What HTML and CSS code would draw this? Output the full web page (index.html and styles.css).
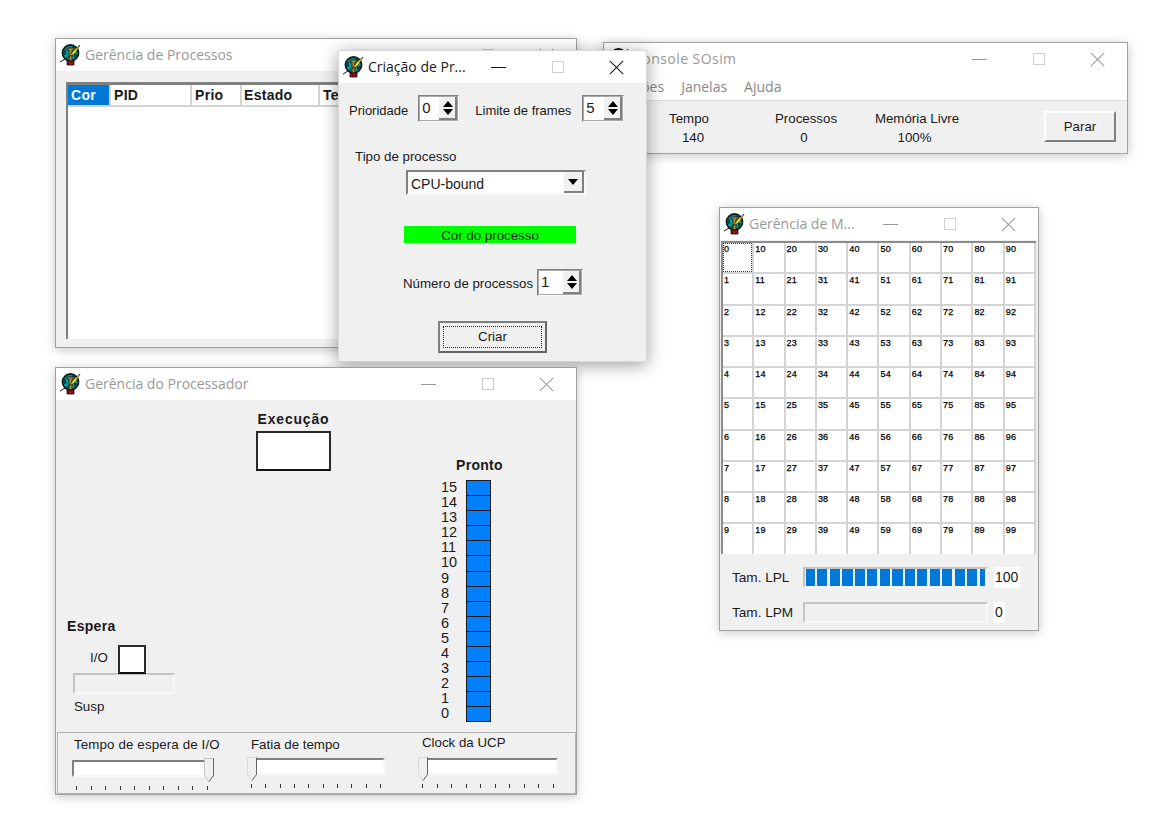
FILE: index.html
```html
<!DOCTYPE html>
<html>
<head>
  <meta charset="utf-8">
  <title>SOsim</title>
  <link rel="stylesheet" href="styles.css">
</head>
<body>
  <svg class="defs" width="0" height="0">
    <symbol id="appIcon" viewBox="0 0 22 22">
      <circle cx="11.500" cy="9" r="8" fill="#0b9a9c" stroke="#0a1c20" stroke-width="1.800"/>
      <path d="M4 6h3v5H4zM15 10h3v4h-3zM13 2h3v2h-3z" fill="#07484e"/>
      <path d="M8 4h8v2h-3v11h-3V6H8z" fill="#a88a40" stroke="#1c1408" stroke-width=".8"/>
      <path d="M8 17h7v4H8z" fill="#8a1414" stroke="#1c0606" stroke-width=".8"/>
      <path d="M1 18l7-4 1 0 4-5 1-2 7-6-4 7-3 3-1 0-4 2-8 5z" fill="#f4f010" stroke="#0a0a0a" stroke-width=".6"/>
    </symbol>
  </svg>

  <!-- Gerencia de processos -->
  <div class="win winProc inactive">
    <div class="titleBar">
      <svg class="appIcon"><use href="#appIcon"/></svg>
      <span class="titleText">Gerência de Processos</span>
      <div class="winBtns">
        <span class="winBtn"><i class="icoMin"></i></span>
        <span class="winBtn"><i class="icoMax"></i></span>
        <span class="winBtn"><i class="icoClose"></i></span>
      </div>
    </div>
    <div class="winBody procBody">
      <div class="procList">
        <div class="procHead">
          <span class="colCor">Cor</span>
          <span class="colPid">PID</span>
          <span class="colPrio">Prio</span>
          <span class="colEstado">Estado</span>
          <span class="colTempo">Tempo</span>
        </div>
      </div>
    </div>
  </div>

  <!-- Console -->
  <div class="win winConsole inactive">
    <div class="titleBar">
      <svg class="appIcon"><use href="#appIcon"/></svg>
      <span class="titleText">Console SOsim</span>
      <div class="winBtns">
        <span class="winBtn"><i class="icoMin"></i></span>
        <span class="winBtn"><i class="icoMax"></i></span>
        <span class="winBtn"><i class="icoClose"></i></span>
      </div>
    </div>
    <div class="menuBar">
      <span>Opções</span>
      <span>Janelas</span>
      <span>Ajuda</span>
    </div>
    <div class="winBody consoleBody">
      <div class="stat statTempo"><span>Tempo</span><span class="statValue">140</span></div>
      <div class="stat statProc"><span>Processos</span><span class="statZero">0</span></div>
      <div class="stat statMem"><span>Memória Livre</span><span class="statPct">100%</span></div>
      <button class="btn btnParar">Parar</button>
    </div>
  </div>

  <!-- Criacao de processos -->
  <div class="win winCreate">
    <div class="titleBar">
      <svg class="appIcon"><use href="#appIcon"/></svg>
      <span class="titleText">Criação de Pr...</span>
      <div class="winBtns">
        <span class="winBtn"><i class="icoMin"></i></span>
        <span class="winBtn"><i class="icoMax"></i></span>
        <span class="winBtn"><i class="icoClose"></i></span>
      </div>
    </div>
    <div class="winBody createBody">
      <div class="createTop">
        <span class="createLabel">Prioridade</span>
        <div class="spin"><span class="spinValue">0</span><span class="spinBtns"><i class="arrowUp"></i><i class="arrowDown"></i></span></div>
        <span class="createLabel frameLabel">Limite de frames</span>
        <div class="spin"><span class="spinValue">5</span><span class="spinBtns"><i class="arrowUp"></i><i class="arrowDown"></i></span></div>
      </div>
      <div class="tipoLabel">Tipo de processo</div>
      <div class="combo"><span class="comboValue">CPU-bound</span><span class="comboBtn"><i class="arrowDown"></i></span></div>
      <div class="colorBar">Cor do processo</div>
      <div class="numRow">
        <span class="numLabel">Número de processos</span>
        <div class="spin spinWide"><span class="spinValue">1</span><span class="spinBtns"><i class="arrowUp"></i><i class="arrowDown"></i></span></div>
      </div>
      <button class="btn btnCriar"><span class="focusRect">Criar</span></button>
    </div>
  </div>

  <!-- Gerencia de memoria -->
  <div class="win winMem inactive">
    <div class="titleBar">
      <svg class="appIcon"><use href="#appIcon"/></svg>
      <span class="titleText">Gerência de M...</span>
      <div class="winBtns">
        <span class="winBtn"><i class="icoMin"></i></span>
        <span class="winBtn"><i class="icoMax"></i></span>
        <span class="winBtn"><i class="icoClose"></i></span>
      </div>
    </div>
    <div class="winBody memBody">
      <div class="memGrid">
        <span class="memFocus">0</span><span>1</span><span>2</span><span>3</span><span>4</span><span>5</span><span>6</span><span>7</span><span>8</span><span>9</span>
        <span>10</span><span>11</span><span>12</span><span>13</span><span>14</span><span>15</span><span>16</span><span>17</span><span>18</span><span>19</span>
        <span>20</span><span>21</span><span>22</span><span>23</span><span>24</span><span>25</span><span>26</span><span>27</span><span>28</span><span>29</span>
        <span>30</span><span>31</span><span>32</span><span>33</span><span>34</span><span>35</span><span>36</span><span>37</span><span>38</span><span>39</span>
        <span>40</span><span>41</span><span>42</span><span>43</span><span>44</span><span>45</span><span>46</span><span>47</span><span>48</span><span>49</span>
        <span>50</span><span>51</span><span>52</span><span>53</span><span>54</span><span>55</span><span>56</span><span>57</span><span>58</span><span>59</span>
        <span>60</span><span>61</span><span>62</span><span>63</span><span>64</span><span>65</span><span>66</span><span>67</span><span>68</span><span>69</span>
        <span>70</span><span>71</span><span>72</span><span>73</span><span>74</span><span>75</span><span>76</span><span>77</span><span>78</span><span>79</span>
        <span>80</span><span>81</span><span>82</span><span>83</span><span>84</span><span>85</span><span>86</span><span>87</span><span>88</span><span>89</span>
        <span>90</span><span>91</span><span>92</span><span>93</span><span>94</span><span>95</span><span>96</span><span>97</span><span>98</span><span>99</span>
      </div>
      <div class="memRow">
        <span class="memLabel">Tam. LPL</span>
        <div class="gauge gaugeFull"></div>
        <span class="memValue">100</span>
      </div>
      <div class="memRow">
        <span class="memLabel">Tam. LPM</span>
        <div class="gauge"></div>
        <span class="memValue">0</span>
      </div>
    </div>
  </div>

  <!-- Gerencia do processador -->
  <div class="win winCpu inactive">
    <div class="titleBar">
      <svg class="appIcon"><use href="#appIcon"/></svg>
      <span class="titleText">Gerência do Processador</span>
      <div class="winBtns">
        <span class="winBtn"><i class="icoMin"></i></span>
        <span class="winBtn"><i class="icoMax"></i></span>
        <span class="winBtn"><i class="icoClose"></i></span>
      </div>
    </div>
    <div class="winBody cpuBody">
      <div class="cpuMain">
        <div class="waitCol">
          <div class="boldLabel">Espera</div>
          <div class="ioRow"><span>I/O</span><div class="blackBox ioBox"></div></div>
          <div class="gauge suspBar"></div>
          <div class="suspLabel">Susp</div>
        </div>
        <div class="execCol">
          <div class="boldLabel execLabel">Execução</div>
          <div class="blackBox execBox"></div>
        </div>
        <div class="readyCol">
          <div class="boldLabel readyTitle">Pronto</div>
          <div class="readyRows">
            <span class="readyNum">15</span><span class="readyCell"></span>
            <span class="readyNum">14</span><span class="readyCell"></span>
            <span class="readyNum">13</span><span class="readyCell"></span>
            <span class="readyNum">12</span><span class="readyCell"></span>
            <span class="readyNum">11</span><span class="readyCell"></span>
            <span class="readyNum">10</span><span class="readyCell"></span>
            <span class="readyNum">9</span><span class="readyCell"></span>
            <span class="readyNum">8</span><span class="readyCell"></span>
            <span class="readyNum">7</span><span class="readyCell"></span>
            <span class="readyNum">6</span><span class="readyCell"></span>
            <span class="readyNum">5</span><span class="readyCell"></span>
            <span class="readyNum">4</span><span class="readyCell"></span>
            <span class="readyNum">3</span><span class="readyCell"></span>
            <span class="readyNum">2</span><span class="readyCell"></span>
            <span class="readyNum">1</span><span class="readyCell"></span>
            <span class="readyNum">0</span><span class="readyCell"></span>
          </div>
        </div>
      </div>
      <div class="sliderPanel">
        <div class="sliderBox sliderIo">
          <div class="sliderLabel">Tempo de espera de I/O</div>
          <div class="track thumbEnd">
            <svg class="thumb" viewBox="0 0 10 24"><path d="M.5.5h9v17l-4.500 6-4.500-6z" fill="#f0f0f0" stroke="#c4c4c4"/><path d="M9.500.5v17l-4.500 6" fill="none" stroke="#666"/></svg>
          </div>
          <div class="ticks"><i></i><i></i><i></i><i></i><i></i><i></i><i></i><i></i><i></i><i></i></div>
        </div>
        <div class="sliderBox sliderFatia">
          <div class="sliderLabel">Fatia de tempo</div>
          <div class="track">
            <svg class="thumb" viewBox="0 0 10 24"><path d="M.5.5h9v17l-4.500 6-4.500-6z" fill="#f0f0f0" stroke="#d8d8d8"/><path d="M9.500.5v17l-4.500 6" fill="none" stroke="#666"/></svg>
          </div>
          <div class="ticks"><i></i><i></i><i></i><i></i><i></i><i></i><i></i><i></i><i></i><i></i></div>
        </div>
        <div class="sliderBox sliderClock">
          <div class="sliderLabel">Clock da UCP</div>
          <div class="track">
            <svg class="thumb" viewBox="0 0 10 24"><path d="M.5.5h9v17l-4.500 6-4.500-6z" fill="#f0f0f0" stroke="#d8d8d8"/><path d="M9.500.5v17l-4.500 6" fill="none" stroke="#666"/></svg>
          </div>
          <div class="ticks"><i></i><i></i><i></i><i></i><i></i><i></i><i></i><i></i><i></i><i></i></div>
        </div>
      </div>
    </div>
  </div>
</body>
</html>
```

FILE: styles.css
```css
* {
  box-sizing: border-box;
}

body {
  background-color: #fff;
  color: #1a1a1a;
  font-family: "Liberation Sans", Arial, sans-serif;
  font-size: 13.3px;
  height: 817px;
  margin: 0;
  overflow: hidden;
  position: relative;
}

.defs {
  position: absolute;
}

/* windows on the desktop */
.win {
  background-color: #fff;
  border: 1px solid #a0a0a0;
  box-shadow: 0 2px 10px rgba(0, 0, 0, 0.22);
  display: flex;
  flex-direction: column;
  position: absolute;
}

.winProc {
  height: 310px;
  left: 55px;
  top: 38px;
  width: 522px;
}

.winConsole {
  height: 112px;
  left: 603px;
  top: 42px;
  width: 525px;
}

.winCreate {
  border-color: #d8d8d8;
  box-shadow: 0 3px 16px rgba(0, 0, 0, 0.38);
  height: 312px;
  left: 338px;
  top: 50px;
  width: 309px;
}

.winMem {
  height: 424px;
  left: 719px;
  top: 207px;
  width: 320px;
}

.winCpu {
  height: 428px;
  left: 55px;
  top: 367px;
  width: 522px;
}

.titleBar {
  align-items: center;
  display: flex;
  flex: none;
  height: 32px;
  padding-left: 3px;
}

.appIcon {
  flex: none;
  height: 22px;
  width: 22px;
}

.titleText {
  font-family: "Open Sans", sans-serif;
  font-size: 14px;
  margin-left: 4px;
  padding-bottom: 2px;
  white-space: nowrap;
}

.inactive .titleText {
  color: #999;
}

.winConsole .titleText {
  letter-spacing: 0.45px;
}

.winBtns {
  display: flex;
  margin-left: auto;
}

.winBtn {
  align-items: center;
  display: flex;
  height: 30px;
  justify-content: center;
  width: 59px;
}

.icoMin {
  background-color: #111;
  height: 1px;
  width: 15px;
}

.icoMax {
  border: 1px solid #d0d0d0;
  height: 12px;
  width: 12px;
}

.icoClose {
  height: 15px;
  position: relative;
  width: 15px;
}

.icoClose::before,
.icoClose::after {
  background-color: #111;
  content: "";
  height: 1px;
  left: -2px;
  position: absolute;
  top: 7px;
  width: 19px;
}

.icoClose::before {
  transform: rotate(45deg);
}

.icoClose::after {
  transform: rotate(-45deg);
}

.inactive .icoMin,
.inactive .icoClose::before,
.inactive .icoClose::after {
  background-color: #999;
}

.winBody {
  background-color: #f0f0f0;
  flex: 1;
}

/* processos */
.procBody {
  padding: 11px 0 8px 10px;
}

.procList {
  background-color: #fff;
  border-left: 2px solid #808080;
  border-top: 3px solid #808080;
  height: 100%;
}

.procHead {
  border-bottom: 2px solid #d4d4d4;
  display: flex;
  font-size: 14px;
  font-weight: bold;
  height: 22px;
  letter-spacing: 0.3px;
  line-height: 20px;
}

.procHead span {
  border-right: 2px solid #d4d4d4;
  flex: none;
  padding-left: 3px;
}

.procHead .colCor {
  background-color: #0078d7;
  color: #fff;
  width: 43px;
}

.colPid {
  width: 81px;
}

.colPrio {
  width: 50px;
}

.procHead .colEstado {
  padding-left: 2px;
  width: 78px;
}

.colTempo {
  width: 80px;
}

/* console */
.menuBar {
  color: #888;
  display: flex;
  flex: none;
  font-family: "Open Sans", sans-serif;
  font-size: 14px;
  gap: 17px;
  height: 25px;
  line-height: 24px;
  padding-left: 11px;
}

.consoleBody {
  border-top: 1px solid #dcdcdc;
  display: flex;
  line-height: 19px;
  padding-top: 8px;
}

.stat {
  display: flex;
  flex-direction: column;
  text-align: center;
  width: 100px;
}

.statTempo {
  margin-left: 35px;
}

.statValue {
  padding-left: 8px;
}

.statZero {
  padding-right: 4px;
}

.statPct {
  padding-right: 5px;
}

.statProc {
  margin-left: 17px;
}

.statMem {
  margin-left: 11px;
}

.btn {
  background-color: #f0f0f0;
  border-bottom: 2px solid #808080;
  border-left: 2px solid #fff;
  border-right: 2px solid #808080;
  border-top: 2px solid #fff;
  color: #1a1a1a;
  font-family: inherit;
  font-size: 13.3px;
  padding: 0;
}

.btnParar {
  height: 31px;
  margin: 2px 11px 0 auto;
  width: 72px;
}

/* criacao */
.createBody {
  padding: 12px 0 0 10px;
}

.createTop {
  align-items: center;
  display: flex;
  font-size: 13px;
}

.createLabel {
  padding-top: 3px;
}

.numLabel {
  padding-top: 1px;
}

.spin {
  background-color: #fff;
  border: 2px solid #808080;
  border-bottom-color: #f8f8f8;
  border-right-color: #f8f8f8;
  display: flex;
  height: 27px;
  justify-content: space-between;
  line-height: 21px;
  margin-left: 10px;
  outline: 1px solid #a8a8a8;
  outline-offset: -2px;
  padding-left: 2px;
  width: 41px;
}

.spinValue {
  font-size: 15px;
}

.spinBtns {
  background-color: #f0f0f0;
  border-bottom: 2px solid #808080;
  border-right: 2px solid #808080;
  display: flex;
  flex: none;
  flex-direction: column;
  gap: 2px;
  justify-content: center;
  padding-left: 4px;
  width: 18px;
}

.frameLabel {
  margin-left: 16px;
}

.frameLabel + .spin {
  margin-left: 11px;
  width: 42px;
}

.arrowUp,
.arrowDown {
  border-left: 5px solid transparent;
  border-right: 5px solid transparent;
  display: block;
  height: 0;
  width: 0;
}

.arrowUp {
  border-bottom: 6px solid #000;
}

.arrowDown {
  border-top: 6px solid #000;
}

.tipoLabel {
  margin: 27px 0 0 6px;
}

.combo {
  background-color: #fff;
  border: 2px solid #808080;
  border-bottom-color: #f8f8f8;
  border-right-color: #f8f8f8;
  display: flex;
  font-size: 14px;
  height: 25px;
  justify-content: space-between;
  line-height: 24px;
  margin: 6px 0 0 57px;
  padding-left: 3px;
  width: 180px;
}

.comboBtn {
  align-items: center;
  background-color: #f0f0f0;
  border-bottom: 2px solid #808080;
  border-right: 2px solid #808080;
  display: flex;
  justify-content: center;
  width: 20px;
}

.colorBar {
  background-color: #00ff00;
  height: 17px;
  line-height: 19px;
  margin: 31px 0 0 55px;
  text-align: center;
  width: 172px;
}

.numRow {
  align-items: center;
  display: flex;
  margin: 26px 0 0 54px;
}

.spinWide {
  margin-left: 4px;
  width: 46px;
}

.btnCriar {
  background-color: #f0f0f0;
  border: 2px solid #666;
  border-left-color: #808080;
  border-top-color: #808080;
  display: block;
  height: 32px;
  margin: 25px 0 0 89px;
  padding: 3px;
  width: 109px;
}

.focusRect {
  border: 1px dotted #222;
  display: block;
  height: 100%;
  line-height: 20px;
}

/* memoria */
.memBody {
  padding: 1px 0 0 1px;
}

.memGrid {
  background-color: #d4d4d4;
  border-left: 2px solid #8c8c8c;
  border-top: 2px solid #8c8c8c;
  display: grid;
  font-size: 9px;
  gap: 2px;
  grid-auto-flow: column;
  grid-template-columns: repeat(10, 29.3px);
  grid-template-rows: repeat(10, 29.25px);
  height: 313px;
  letter-spacing: 0.2px;
  width: 315px;
}

.memGrid span {
  background-color: #fff;
  color: #000;
  -webkit-text-stroke: 0.25px #000;
  line-height: 13px;
  padding-left: 1px;
}

.memGrid .memFocus {
  outline: 1px dotted #333;
  outline-offset: -1px;
}

.memRow {
  align-items: center;
  display: flex;
  height: 21px;
  margin: 13px 0 0 11px;
}

.memRow + .memRow {
  margin-top: 14px;
}

.memLabel {
  font-size: 13.6px;
  width: 71px;
}

.gauge {
  background-color: #f0f0f0;
  border: 2px solid #c4c4c4;
  border-bottom-color: #f8f8f8;
  border-right-color: #f8f8f8;
  height: 21px;
  width: 185px;
}

.gaugeFull {
  background-clip: content-box;
  background-image: repeating-linear-gradient(90deg, #0078d7 0, #0078d7 10px, #f0f0f0 10px, #f0f0f0 12.5px);
  padding: 0 1px;
}

.memValue {
  background-color: #fff;
  font-size: 14px;
  line-height: 21px;
  margin-left: 6px;
  padding: 0 2px 0 1px;
}

/* processador */
.cpuBody {
  display: flex;
  flex-direction: column;
}

.cpuMain {
  display: flex;
  height: 330px;
}

.boldLabel {
  font-size: 14px;
  font-weight: bold;
  letter-spacing: 0.3px;
}

.waitCol {
  align-self: flex-end;
  padding: 0 0 16px 11px;
  width: 199px;
}

.ioRow {
  align-items: center;
  display: flex;
  margin: 11px 0 0 23px;
}

.ioRow span {
  padding-bottom: 4px;
  width: 28px;
}

.blackBox {
  background-color: #fff;
  border: 2px solid #2a2a2a;
  border-bottom-color: #111;
}

.ioBox {
  height: 29px;
  width: 28px;
}

.suspBar {
  height: 21px;
  margin: -1px 0 0 6px;
  width: 102px;
}

.suspLabel {
  margin: 5px 0 0 7px;
}

.execCol {
  align-items: center;
  display: flex;
  flex-direction: column;
  padding-top: 11px;
  width: 76px;
}

.execLabel {
  letter-spacing: 0.8px;
  padding-left: 1px;
  white-space: nowrap;
}

.execBox {
  height: 40px;
  margin-top: 4px;
  width: 75px;
}

.readyCol {
  margin-left: 110px;
  padding-top: 57px;
  width: 65px;
}

.readyTitle {
  margin-bottom: 7px;
  padding-left: 15px;
}

.readyRows {
  display: grid;
  grid-auto-rows: 15.1px;
  grid-template-columns: 25px 25px;
}

.readyNum {
  font-size: 14.5px;
  line-height: 15px;
}

.readyCell {
  background-color: #0080ff;
  border: 1px solid #1a1a1a;
  border-bottom: 0;
}

.readyCell:last-child {
  border-bottom: 1px solid #1a1a1a;
}

.sliderPanel {
  border: 1px solid #b4b4b4;
  display: flex;
  height: 62px;
  margin: 2px 0 0 1px;
  width: 519px;
}

.sliderBox {
  flex: none;
  position: relative;
  width: 140px;
}

.sliderIo {
  margin-left: 14px;
}

.sliderFatia {
  margin-left: 35px;
  width: 138px;
}

.sliderClock {
  margin-left: 33px;
}

.sliderLabel {
  line-height: 16px;
  margin: 4px 0 0 2px;
  white-space: nowrap;
}

.sliderIo .sliderLabel {
  letter-spacing: 0.14px;
}

.sliderFatia .sliderLabel {
  margin-left: 4px;
}

.sliderClock .sliderLabel {
  margin: 2px 0 0 4px;
}

.track {
  background-color: #fff;
  border: 2px solid #808080;
  border-bottom-color: #f8f8f8;
  border-right-color: #f8f8f8;
  height: 17px;
  margin-top: 5px;
}

.sliderIo .track {
  margin-top: 7px;
}

.sliderClock .track {
  margin-top: 7px;
}

/* the thumb hangs over the track */
.thumb {
  height: 24px;
  left: 0;
  position: absolute;
  top: 24px;
  width: 10px;
}

.sliderIo .thumb {
  top: 25px;
}

.thumbEnd .thumb {
  left: 132px;
}

.ticks {
  display: flex;
  justify-content: space-between;
  margin: 9px 4px 0;
  width: 132px;
}

.sliderFatia .ticks {
  width: 130px;
}

.ticks i {
  background-color: #333;
  display: block;
  height: 4px;
  width: 1px;
}
```
